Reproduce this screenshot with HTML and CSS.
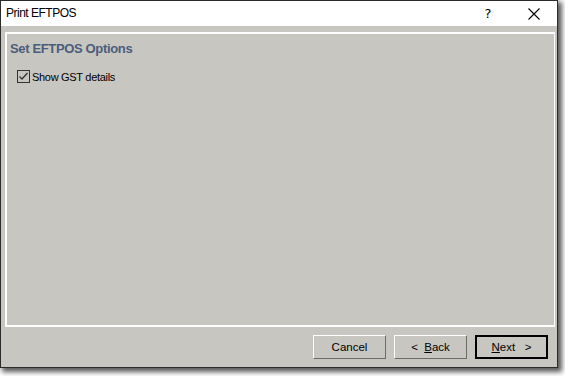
FILE: index.html
```html
<!DOCTYPE html>
<html>
<head>
<meta charset="utf-8">
<link rel="stylesheet" href="styles.css">
</head>
<body>
<div class="window">
  <div class="titlebar">
    <span class="title">Print EFTPOS</span>
    <div class="controls">
      <span class="help">?</span>
      <span class="close">
        <svg width="12" height="12" viewBox="0 0 12 12"><path d="M0.5 0.5 L11.5 11.5 M11.5 0.5 L0.5 11.5" stroke="#000" stroke-width="1.1" fill="none"/></svg>
      </span>
    </div>
  </div>
  <div class="body">
    <div class="panel">
      <h1 class="heading">Set EFTPOS Options</h1>
      <label class="check">
        <span class="box">
          <svg width="11" height="11" viewBox="0 0 11 11"><path d="M1.5 5.5 L4 8 L9.5 2" stroke="#333" stroke-width="1.3" fill="none"/></svg>
        </span>
        <span class="label">Show GST details</span>
      </label>
    </div>
    <div class="footer">
      <button class="btn">Cancel</button>
      <button class="btn">&lt;&nbsp;&nbsp;<u>B</u>ack</button>
      <button class="btn default"><u>N</u>ext&nbsp;&nbsp;&nbsp;&gt;</button>
    </div>
  </div>
</div>
</body>
</html>
```

FILE: styles.css
```css
html, body {
  margin: 0;
  padding: 0;
  background: #ffffff;
}
body {
  width: 565px;
  height: 376px;
  overflow: hidden;
  font-family: "Liberation Sans", sans-serif;
}
.window {
  width: 556px;
  height: 366px;
  border: 1px solid #2b2b2b;
  background: #c8c6c0;
  box-shadow: 3px 3px 5px 1px rgba(0, 0, 0, 0.65);
  display: flex;
  flex-direction: column;
}
.titlebar {
  height: 25px;
  background: #ffffff;
  display: flex;
  align-items: center;
  justify-content: space-between;
  flex-shrink: 0;
}
.title {
  font-family: "Liberation Sans", sans-serif;
  font-size: 12px;
  letter-spacing: -0.5px;
  color: #000;
  padding-left: 5px;
  margin-top: -1px;
}
.controls {
  display: flex;
  align-items: center;
}
.help {
  font-family: "DejaVu Sans", sans-serif;
  font-size: 13px;
  width: 46px;
  text-align: center;
}
.close {
  width: 46px;
  display: flex;
  justify-content: center;
}
.body {
  flex: 1;
  display: flex;
  flex-direction: column;
  padding: 6px 2px 0 4px;
}
.panel {
  flex: 1;
  border: 2px solid #ffffff;
  border-right-width: 1px;
  border-bottom-width: 2px;
  padding: 7px 3px;
}
.heading {
  margin: 0;
  font-family: "Liberation Sans", sans-serif;
  font-size: 13px;
  line-height: 15px;
  font-weight: bold;
  color: #4b5d7c;
  letter-spacing: -0.35px;
}
.check {
  display: flex;
  align-items: center;
  margin-top: 14px;
  margin-left: 7px;
}
.box {
  width: 11px;
  height: 11px;
  border: 1px solid #333;
  display: flex;
}
.label {
  font-family: "Liberation Sans", sans-serif;
  font-size: 11px;
  letter-spacing: -0.3px;
  color: #000;
  margin-left: 2px;
}
.footer {
  height: 40px;
  display: flex;
  justify-content: flex-end;
  align-items: flex-start;
  gap: 8px;
  padding-top: 8px;
  padding-right: 7px;
  box-sizing: border-box;
  flex-shrink: 0;
}
.btn {
  width: 73px;
  height: 24px;
  background: #c8c6c0;
  border: 1px solid;
  border-color: #ffffff #6d6b66 #6d6b66 #ffffff;
  font-family: "Liberation Sans", sans-serif;
  font-size: 11.5px;
  color: #000;
  padding: 0;
}
.btn.default {
  border: 2px solid #000;
}
```
